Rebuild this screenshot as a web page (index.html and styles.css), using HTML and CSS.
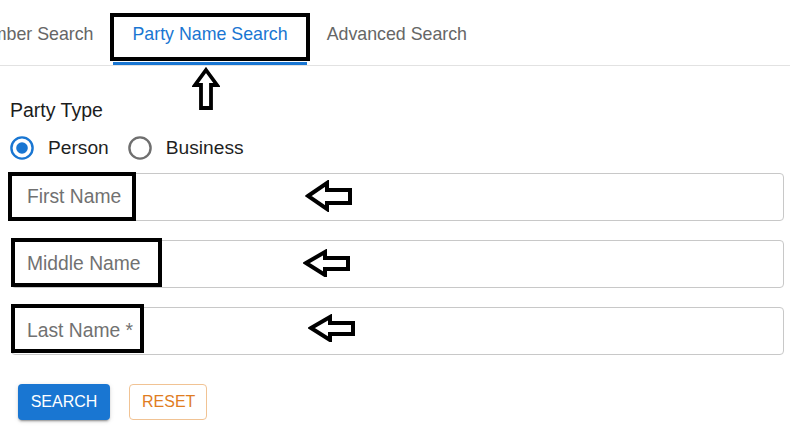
FILE: index.html
```html
<!DOCTYPE html>
<html>
<head>
<meta charset="utf-8">
<link rel="stylesheet" href="styles.css">
</head>
<body>
<div class="page">
  <div class="tabbar">
    <div class="tablist">
      <div class="tab">Case Number Search</div>
      <div class="tab active">Party Name Search</div>
      <div class="tab">Advanced Search</div>
    </div>
    <div class="mark mark-tab"></div>
    <svg class="arrow-up" width="28" height="44" viewBox="0 0 28 44"><path d="M14 3 L25 18 L19 18 L19 41 L9 41 L9 18 L3 18 Z" fill="#fff" stroke="#000" stroke-width="3.8" stroke-linejoin="miter"/></svg>
  </div>

  <form class="form">
    <div class="label">Party Type</div>
    <div class="radios">
      <label class="radio">
        <svg width="26" height="26" viewBox="0 0 26 26"><circle cx="13" cy="13" r="10.6" fill="none" stroke="#1976d2" stroke-width="2.4"/><circle cx="13" cy="13" r="5.8" fill="#1976d2"/></svg>
        <span>Person</span>
      </label>
      <label class="radio">
        <svg width="26" height="26" viewBox="0 0 26 26"><circle cx="13" cy="13" r="10.6" fill="none" stroke="#6f6f6f" stroke-width="2.4"/></svg>
        <span>Business</span>
      </label>
    </div>

    <div class="fields">
      <div class="field">
        <span class="placeholder">First Name</span>
        <div class="mark mark-first"></div>
        <svg class="arrow-left a1" width="48" height="32" viewBox="0 0 48 32"><path d="M3 16 L22 3 L22 10 L45 10 L45 23 L22 23 L22 29 Z" fill="#fff" stroke="#000" stroke-width="4"/></svg>
      </div>
      <div class="field">
        <span class="placeholder">Middle Name</span>
        <div class="mark mark-middle"></div>
        <svg class="arrow-left a2" width="48" height="28" viewBox="0 0 48 28"><path d="M3 14 L22 3 L22 9 L45 9 L45 20 L22 20 L22 26 Z" fill="#fff" stroke="#000" stroke-width="4"/></svg>
      </div>
      <div class="field">
        <span class="placeholder">Last Name *</span>
        <div class="mark mark-last"></div>
        <svg class="arrow-left a3" width="48" height="28" viewBox="0 0 48 28"><path d="M3 14 L22 3 L22 9 L45 9 L45 20 L22 20 L22 26 Z" fill="#fff" stroke="#000" stroke-width="4"/></svg>
      </div>
    </div>

    <div class="actions">
      <button type="button" class="btn btn-search">SEARCH</button>
      <button type="button" class="btn btn-reset">RESET</button>
    </div>
  </form>
</div>
</body>
</html>
```

FILE: styles.css
```css
* { box-sizing: border-box; }
html, body { margin: 0; padding: 0; background: #fff; }
body {
  font-family: "Liberation Sans", Arial, sans-serif;
  width: 790px;
  height: 430px;
  overflow: hidden;
}
.page { position: relative; }

.tabbar {
  position: relative;
  height: 66px;
  border-bottom: 1px solid #e2e2e2;
}
.tablist {
  display: flex;
  margin-left: -97px;
  height: 65px;
}
.tab {
  height: 65px;
  padding: 0 19.5px;
  padding-top: 7px;
  display: flex;
  align-items: center;
  font-size: 17.8px;
  color: #666;
  white-space: nowrap;
  border-bottom: 3px solid transparent;
}
.tab.active {
  color: #1976d2;
  border-bottom-color: #1976d2;
}

.mark {
  position: absolute;
  border: 4px solid #000;
  pointer-events: none;
}
.mark-tab { left: 110px; top: 13px; width: 200px; height: 48px; }

.arrow-up { position: absolute; left: 192px; top: 67px; }

.form {
  padding: 33px 0 0 10px;
  margin: 0;
}
.label {
  font-size: 19.5px;
  color: #1c1c1c;
  line-height: 22px;
  height: 22px;
}
.radios {
  display: flex;
  align-items: center;
  gap: 19px;
  margin-top: 9px;
  height: 36px;
}
.radio {
  display: flex;
  align-items: center;
  gap: 13px;
  font-size: 19.2px;
  color: #1f1f1f;
}
.radio svg { display: block; margin-left: -1px; }

.fields {
  display: flex;
  flex-direction: column;
  gap: 19px;
  margin-top: 7px;
}
.field {
  position: relative;
  margin-left: 1px;
  width: 773px;
  height: 48px;
  border: 1px solid #c8c8c8;
  border-radius: 4px;
  display: flex;
  align-items: center;
  padding-left: 15px;
}
.placeholder {
  font-size: 19.3px;
  color: #717171;
}
.mark-first { left: -4px; top: -2px; width: 128px; height: 49px; }
.mark-middle { left: -1px; top: -3px; width: 151px; height: 49px; }
.mark-last { left: -1px; top: -4px; width: 133px; height: 49px; }

.arrow-left { position: absolute; }
.a1 { left: 293px; top: 6px; }
.a2 { left: 291px; top: 8px; }
.a3 { left: 296px; top: 6px; }

.actions {
  display: flex;
  gap: 19px;
  margin-left: 8px;
  margin-top: 29px;
}
.btn {
  font-family: "Liberation Sans", Arial, sans-serif;
  font-size: 16px;
  height: 36px;
  border-radius: 4px;
  padding: 0 12px;
  cursor: pointer;
}
.btn-search {
  width: 92px;
  background: #1976d2;
  color: #fff;
  border: none;
  box-shadow: 0 3px 1px -2px rgba(0,0,0,.2), 0 2px 2px 0 rgba(0,0,0,.14), 0 1px 5px 0 rgba(0,0,0,.12);
}
.btn-reset {
  width: 78px;
  background: #fff;
  color: #e07d1f;
  border: 1px solid #f1c394;
}
```
